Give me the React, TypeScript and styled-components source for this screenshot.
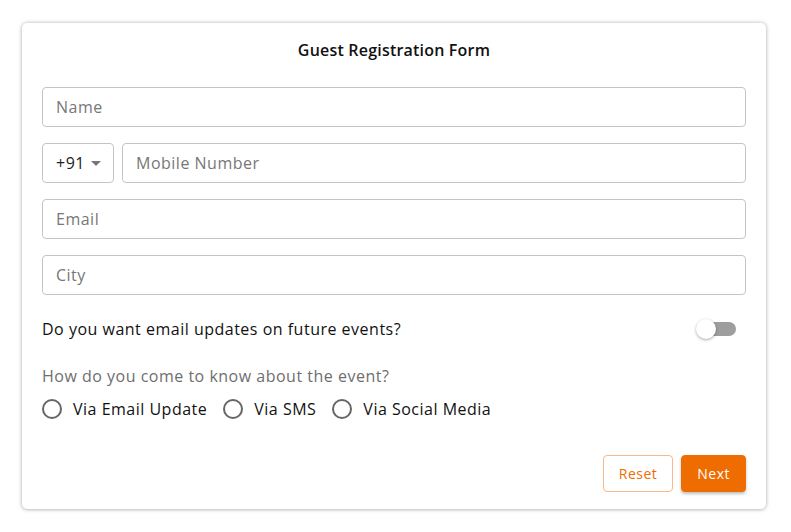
import React, { useState } from "react"
import styled, { createGlobalStyle } from "styled-components"

const GlobalStyle = createGlobalStyle`
  body {
    margin: 0;
    background: #ffffff;
    font-family: "Open Sans", "Noto Sans", sans-serif;
    letter-spacing: 0.5px;
  }
  * { box-sizing: border-box; }
`

const Page = styled.div`
  padding: 23px 25px 23px 22px;
`

const Card = styled.form`
  width: 744px;
  height: 486px;
  background: #fff;
  border-radius: 5px;
  box-shadow: 0 0 4px rgba(60, 60, 90, 0.35), 0 1px 3px rgba(60, 60, 90, 0.15);
  padding: 16px 20px 17px 20px;
  display: flex;
  flex-direction: column;
`

const Title = styled.h1`
  margin: 0 0 26px;
  text-align: center;
  font-size: 16px;
  font-weight: 600;
  letter-spacing: 0.2px;
  color: #111;
  line-height: 22px;
`

const Fields = styled.div`
  display: flex;
  flex-direction: column;
  gap: 16px;
`

const Row = styled.div`
  display: flex;
  gap: 8px;
`

const Input = styled.input`
  width: 100%;
  min-width: 0;
  height: 40px;
  flex-shrink: 1;
  border: 1px solid #c4c4c4;
  border-radius: 4px;
  padding: 0 13px;
  font-family: inherit;
  letter-spacing: inherit;
  font-size: 16px;
  color: #222;
  outline: none;
  &::placeholder { color: #777; }
`

const CodeBox = styled.div`
  flex-shrink: 0;
  width: 72px;
  height: 40px;
  border: 1px solid #c4c4c4;
  border-radius: 4px;
  display: flex;
  align-items: center;
  padding-left: 13px;
  gap: 6px;
  font-size: 16px;
  color: #222;
`

const Caret = styled.span`
  width: 0;
  height: 0;
  border-left: 5px solid transparent;
  border-right: 5px solid transparent;
  border-top: 5px solid #777;
`

const ToggleRow = styled.div`
  display: flex;
  align-items: center;
  justify-content: space-between;
  margin-top: 22px;
  height: 24px;
  font-size: 16px;
  color: #111;
`

const Switch = styled.button<{ $on: boolean }>`
  position: relative;
  width: 40px;
  height: 20px;
  border: none;
  background: transparent;
  padding: 0;
  margin-right: 10px;
  cursor: pointer;
  &::before {
    content: "";
    position: absolute;
    left: 4px;
    right: 0;
    top: 3px;
    height: 14px;
    border-radius: 7px;
    background: ${p => (p.$on ? "#f9a66c" : "#9e9e9e")};
  }
  &::after {
    content: "";
    position: absolute;
    top: 0;
    left: ${p => (p.$on ? "20px" : "0")};
    width: 20px;
    height: 20px;
    border-radius: 50%;
    background: ${p => (p.$on ? "#ef6c00" : "#fff")};
    box-shadow: 0 1px 3px rgba(0, 0, 0, 0.35);
  }
`

const Question = styled.div`
  margin-top: 24px;
  font-size: 16px;
  color: #6e6e6e;
  line-height: 22px;
`

const Options = styled.div`
  display: flex;
  gap: 16px;
  margin-top: 11px;
`

const Option = styled.label`
  display: flex;
  align-items: center;
  height: 22px;
  gap: 11px;
  font-size: 16px;
  color: #111;
  cursor: pointer;
`

const Radio = styled.span<{ $checked: boolean }>`
  width: 20px;
  height: 20px;
  border-radius: 50%;
  border: 2px solid ${p => (p.$checked ? "#ef6c00" : "#666")};
  display: flex;
  align-items: center;
  justify-content: center;
  &::after {
    content: "";
    width: 10px;
    height: 10px;
    border-radius: 50%;
    background: ${p => (p.$checked ? "#ef6c00" : "transparent")};
  }
`

const Actions = styled.div`
  margin-top: auto;
  display: flex;
  justify-content: flex-end;
  gap: 8px;
`

const Button = styled.button<{ $primary?: boolean }>`
  height: 37px;
  padding: 0 15px;
  border-radius: 4px;
  font-family: inherit;
  letter-spacing: inherit;
  font-size: 14px;
  cursor: pointer;
  border: 1px solid ${p => (p.$primary ? "#ef6c00" : "#f6b98a")};
  background: ${p => (p.$primary ? "#ef6c00" : "#fff")};
  color: ${p => (p.$primary ? "#fff" : "#ef6c00")};
  box-shadow: ${p => (p.$primary ? "0 2px 3px rgba(0,0,0,0.25)" : "none")};
`

const sources = ["Via Email Update", "Via SMS", "Via Social Media"]

export default function App() {
  const [updates, setUpdates] = useState(false)
  const [source, setSource] = useState("")
  return (
    <Page>
      <GlobalStyle />
      <Card onSubmit={e => e.preventDefault()}>
        <Title>Guest Registration Form</Title>
        <Fields>
          <Input placeholder="Name" />
          <Row>
            <CodeBox>
              +91 <Caret />
            </CodeBox>
            <Input placeholder="Mobile Number" />
          </Row>
          <Input placeholder="Email" />
          <Input placeholder="City" />
        </Fields>
        <ToggleRow>
          Do you want email updates on future events?
          <Switch type="button" $on={updates} onClick={() => setUpdates(!updates)} />
        </ToggleRow>
        <Question>How do you come to know about the event?</Question>
        <Options>
          {sources.map(s => (
            <Option key={s} onClick={() => setSource(s)}>
              <Radio $checked={source === s} />
              {s}
            </Option>
          ))}
        </Options>
        <Actions>
          <Button type="reset">Reset</Button>
          <Button $primary type="submit">Next</Button>
        </Actions>
      </Card>
    </Page>
  )
}
